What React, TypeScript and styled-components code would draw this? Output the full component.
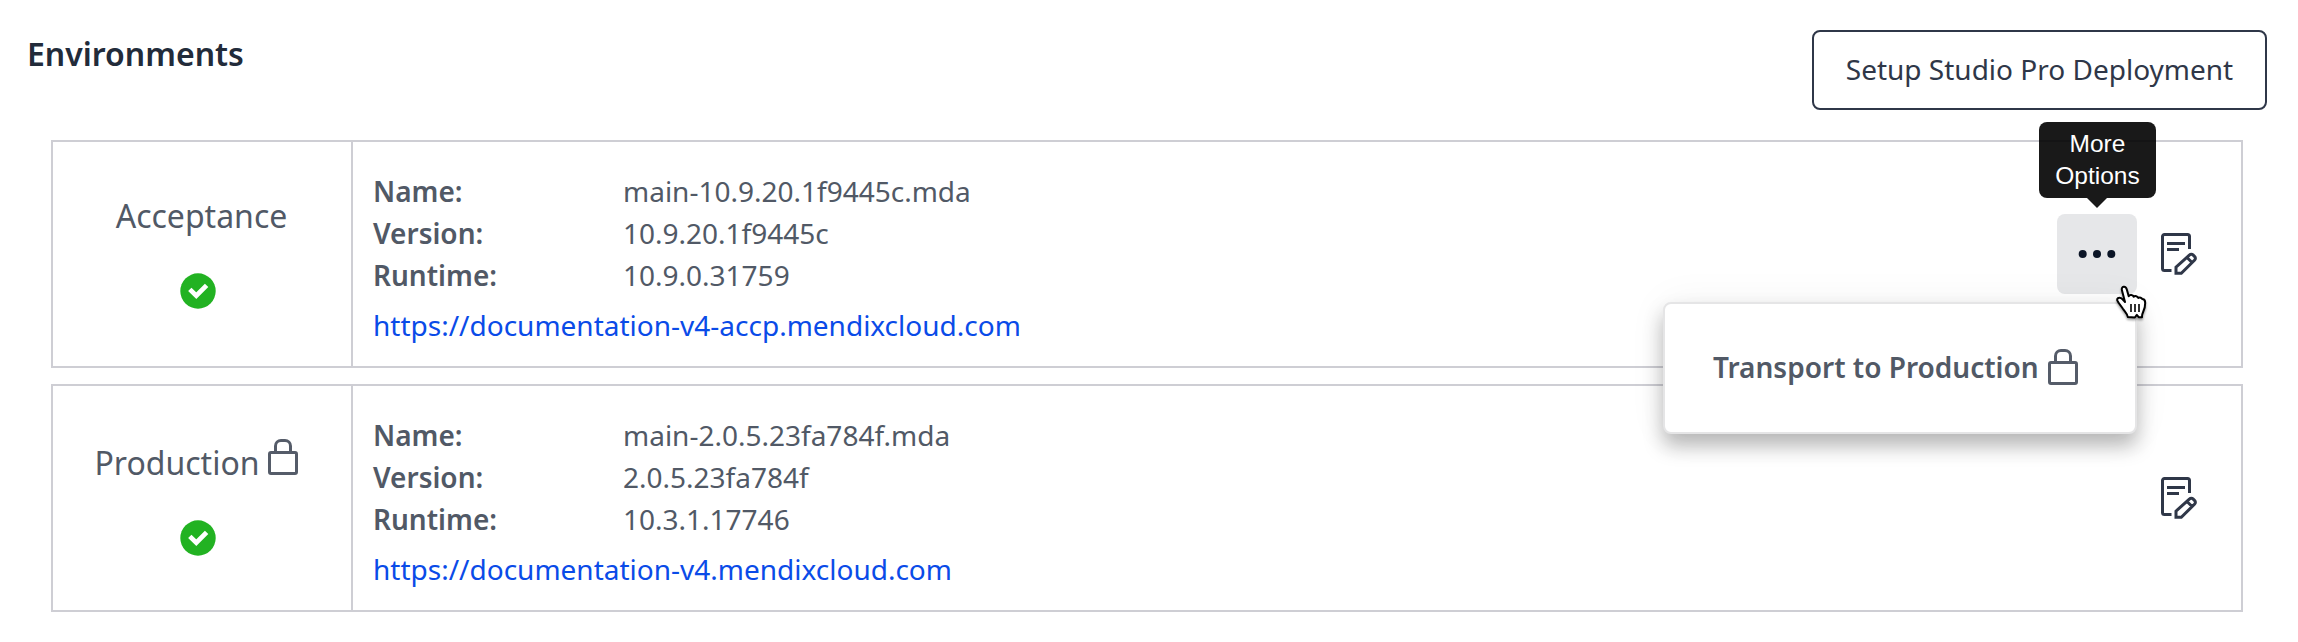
import React from "react";
import styled, { createGlobalStyle } from "styled-components";

const GlobalStyle = createGlobalStyle`
  * { box-sizing: border-box; }
  body {
    margin: 0;
    background: #fff;
    color: #515966;
    font-family: "Noto Sans", "Open Sans", sans-serif;
    font-size: 28px;
    line-height: 42px;
  }
`;

const Page = styled.main`
  width: 2298px;
  height: 642px;
  padding: 30px 31px 0 27px;
  overflow: hidden;
`;

const Header = styled.header`
  display: flex;
  justify-content: space-between;
  align-items: flex-start;
  height: 80px;
`;

const Heading = styled.h2`
  margin: 0;
  color: #222b3a;
  font-size: 32px;
  font-weight: 600;
  line-height: 48px;
`;

const SetupButton = styled.button`
  width: 455px;
  height: 80px;
  padding: 0 0 2px;
  border: 2px solid #2f3748;
  border-radius: 8px;
  background: #fff;
  color: #2f3748;
  font: inherit;
`;

const CardList = styled.section`
  display: flex;
  flex-direction: column;
  gap: 16px;
  margin: 30px 24px 0;
`;

const Card = styled.article`
  display: flex;
  height: 228px;
  border: 2px solid #ceced4;
`;

const Summary = styled.div`
  display: flex;
  flex-direction: column;
  align-items: center;
  width: 300px;
  padding-top: 50px;
  border-right: 2px solid #ceced4;
`;

const Title = styled.div<{ $locked?: boolean }>`
  display: flex;
  align-items: flex-end;
  gap: 8px;
  height: ${(p) => (p.$locked ? 51 : 48)}px;
  margin-right: ${(p) => (p.$locked ? 12 : 1)}px;
  font-size: 32px;
  line-height: 48px;

  svg { margin-bottom: 12px; }
`;

const Status = styled.div`
  display: flex;
  margin: 33px 8px 0 0;
`;

const Details = styled.div`
  flex: 1;
  padding: 28px 0 0 20px;
`;

const Fields = styled.dl`
  display: grid;
  grid-template-columns: 250px auto;
  margin: 0 0 8px;
`;

const Label = styled.dt`
  font-weight: 600;
`;

const Value = styled.dd`
  margin: 0;
`;

const Link = styled.a`
  color: #0a4be8;
  text-decoration: none;
`;

const Actions = styled.div`
  display: flex;
  align-items: center;
  gap: 24px;
  padding-right: 44px;
`;

const MoreAnchor = styled.div`
  position: relative;
`;

const MoreButton = styled.button`
  display: flex;
  align-items: center;
  justify-content: center;
  width: 80px;
  height: 80px;
  padding: 0;
  border: 0;
  border-radius: 8px;
  background: #e6e7e9;
`;

const Tooltip = styled.div`
  position: absolute;
  left: -18px;
  bottom: 96px;
  width: 117px;
  height: 76px;
  padding: 6px 0;
  border-radius: 8px;
  background: rgba(0, 0, 0, 0.9);
  color: #fff;
  font-family: "Liberation Sans", Arial, sans-serif;
  font-size: 24.5px;
  line-height: 32px;
  text-align: center;

  &::after {
    content: "";
    position: absolute;
    top: 100%;
    left: 48px;
    border: 10px solid transparent;
    border-bottom-width: 0;
    border-top-color: rgba(0, 0, 0, 0.9);
  }
`;

const Menu = styled.div`
  position: absolute;
  z-index: 1;
  top: 88px;
  right: 0;
  display: flex;
  align-items: center;
  width: 474px;
  height: 132px;
  padding: 0 0 2px 48px;
  border: 2px solid #e5e5e6;
  border-radius: 8px;
  background: #fff;
  box-shadow: 0 12px 20px rgba(0, 0, 0, 0.27), 0 0 40px rgba(0, 0, 0, 0.05);
  font-weight: 600;
  white-space: nowrap;
`;

const MenuItem = styled.div`
  display: flex;
  align-items: center;
  gap: 9px;
`;

const Cursor = styled.svg`
  position: absolute;
  z-index: 2;
  left: 57px;
  top: 70px;
  filter: drop-shadow(0 2px 1px rgba(0, 0, 0, 0.35));
`;

const LockIcon = () => (
  <svg width="30" height="36" viewBox="0 0 30 36" fill="none" stroke="#555c69" strokeWidth="3">
    <rect x="1.5" y="13.5" width="27" height="21" rx="1.5" />
    <path d="M7.5 13V7a5.5 5.5 0 0 1 5.5-5.5h4A5.5 5.5 0 0 1 22.5 7v6" />
  </svg>
);

const CheckIcon = () => (
  <svg width="36" height="36" viewBox="0 0 36 36">
    <circle cx="18" cy="18" r="17.7" fill="#22b222" />
    <path d="M9.8 16.4l6.5 6.3L26.6 12.4" fill="none" stroke="#fff" strokeWidth="4.8" />
  </svg>
);

const DotsIcon = () => (
  <svg width="38" height="10" viewBox="0 0 38 10" fill="#0b1526">
    <circle cx="4.7" cy="5" r="4" />
    <circle cx="19" cy="5" r="4" />
    <circle cx="33.3" cy="5" r="4" />
  </svg>
);

const EditNoteIcon = () => (
  <svg width="36" height="42" viewBox="0 0 36 42" fill="none" stroke="#2f3748" strokeWidth="3">
    <path d="M10.5 37.5h-7a2 2 0 0 1-2-2v-32a2 2 0 0 1 2-2h23a2 2 0 0 1 2 2V16" />
    <path d="M6 10.5h18M6 16.5h12" />
    <path d="M15 40.3v-6.2L28.6 21.9a2.4 2.4 0 0 1 3.4 0l1.7 1.7a2.4 2.4 0 0 1 0 3.4L20.3 40.3zM26 24.5l5.3 5.3" />
  </svg>
);

const HandCursor = () => (
  <Cursor width="34" height="36" viewBox="0 0 34 36">
    <path
      d="M13.800 33c-.3-3.200-3-5.300-4.900-8.300-1.400-2.400-4.400-5.200-5.500-8-.8-2.200 1.300-3.800 3.600-2.600 1.500.8 2.600 2.500 4 3.900L8 6.500C7.400 4.300 8.300 3 9.600 2.700c1.600-.3 2.700.8 3.200 2.700l1.900 6.800c.9-1.700 4.300-1.400 4.900.6 1.300-1.400 4.200-.7 4.700 1.200 1.500-.9 3.400-.1 4 1.100 2 .1 2.900 1.500 2.900 3.800 0 3.800-.7 6.200-2 8.800-.9 1.900-1.300 3.300-1.200 5.500h-3.300l-1.900-2.300-2 2.600z"
      fill="#fff" stroke="#000" strokeWidth="2" strokeLinejoin="round"
    />
    <path d="M17 20v8M21 20v8M25 20v8" stroke="#000" strokeWidth="1.600" />
  </Cursor>
);

interface Environment {
  title: string;
  locked?: boolean;
  name: string;
  version: string;
  runtime: string;
  url: string;
  menuOpen?: boolean;
}

const environments: Environment[] = [
  {
    title: "Acceptance",
    name: "main-10.9.20.1f9445c.mda",
    version: "10.9.20.1f9445c",
    runtime: "10.9.0.31759",
    url: "https://documentation-v4-accp.mendixcloud.com",
    menuOpen: true,
  },
  {
    title: "Production",
    locked: true,
    name: "main-2.0.5.23fa784f.mda",
    version: "2.0.5.23fa784f",
    runtime: "10.3.1.17746",
    url: "https://documentation-v4.mendixcloud.com",
  },
];

const EnvironmentCard = ({ env }: { env: Environment }) => (
  <Card>
    <Summary>
      <Title $locked={env.locked}>
        {env.title}
        {env.locked && <LockIcon />}
      </Title>
      <Status><CheckIcon /></Status>
    </Summary>
    <Details>
      <Fields>
        <Label>Name:</Label><Value>{env.name}</Value>
        <Label>Version:</Label><Value>{env.version}</Value>
        <Label>Runtime:</Label><Value>{env.runtime}</Value>
      </Fields>
      <Link href={env.url}>{env.url}</Link>
    </Details>
    <Actions>
      {env.menuOpen && (
        <MoreAnchor>
          <Tooltip role="tooltip">More<br />Options</Tooltip>
          <Menu>
            <MenuItem>Transport to Production<LockIcon /></MenuItem>
          </Menu>
          <MoreButton aria-label="More options"><DotsIcon /></MoreButton>
          <HandCursor />
        </MoreAnchor>
      )}
      <EditNoteIcon />
    </Actions>
  </Card>
);

export default function App() {
  return (
    <Page>
      <GlobalStyle />
      <Header>
        <Heading>Environments</Heading>
        <SetupButton>Setup Studio Pro Deployment</SetupButton>
      </Header>
      <CardList>
        {environments.map((env) => <EnvironmentCard key={env.title} env={env} />)}
      </CardList>
    </Page>
  );
}
